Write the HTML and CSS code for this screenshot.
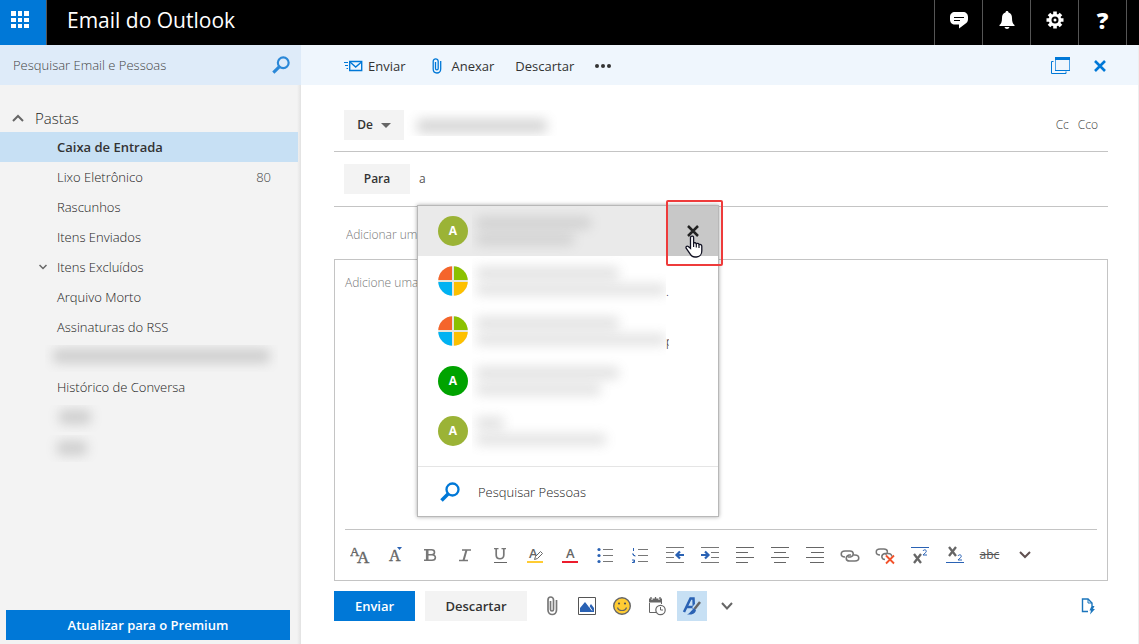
FILE: index.html
```html
<!DOCTYPE html>
<html lang="pt-BR">
<head>
<meta charset="utf-8">
<title>Email do Outlook</title>
<link rel="stylesheet" href="styles.css">
</head>
<body>
<header class="topbar">
  <button class="launcher" aria-label="Aplicativos">
    <svg width="18" height="18" viewBox="0 0 18 18" fill="#fff"><path d="M0 0h5v5H0zM7 0h4v5H7zM13 0h5v5h-5zM0 7h5v4H0zM7 7h4v4H7zM13 7h5v4h-5zM0 13h5v4H0zM7 13h4v4H7zM13 13h5v4h-5z"/></svg>
  </button>
  <h1 class="brand">Email do Outlook</h1>
  <nav class="top-actions">
    <button aria-label="Chat"><svg width="18" height="18" viewBox="0 0 18 18"><path d="M5 1h8c3 0 5 2 5 5v2c0 2-1 4-3 5l-6 4.500v-4H5c-3 0-5-2-5-5V6c0-3 2-5 5-5z" fill="#fff"/><path d="M4 6.500h10M4 9.500h6" stroke="#000" stroke-width="1.200"/></svg></button>
    <button aria-label="Notificações"><svg width="16" height="18" viewBox="0 0 16 18" fill="#fff"><path d="M8 0c1 0 1.500.6 1.500 1.500C12 2.200 13 4.200 13 7c0 4 .8 5.600 2.500 7v1H.5v-1C2.200 12.600 3 11 3 7c0-2.800 1-4.800 3.500-5.500C6.500.6 7 0 8 0zM5.500 16h5c-.4 1.300-1.300 2-2.500 2s-2.100-.7-2.500-2z"/></svg></button>
    <button aria-label="Configurações"><svg width="18" height="18" viewBox="0 0 18 18"><g stroke="#fff" stroke-width="3.600"><path d="M9 .5v17M.5 9h17M3 3l12 12M15 3L3 15"/></g><circle cx="9" cy="9" r="6.300" fill="#fff"/><circle cx="9" cy="9" r="3.500" fill="#000"/><circle cx="9" cy="9" r="1.500" fill="#fff"/></svg></button>
    <button class="help" aria-label="Ajuda">?</button>
  </nav>
</header>

<div class="shell">
  <aside class="sidebar">
    <form class="search">
      <input type="text" aria-label="Pesquisar Email e Pessoas" placeholder="Pesquisar Email e Pessoas">
      <button type="button" aria-label="Pesquisar"><svg width="18" height="18" viewBox="0 0 20 20" fill="none" stroke="#2b88d8"><circle cx="12.500" cy="7.500" r="6" stroke-width="2.400"/><path d="M8 12L1.500 18.500" stroke-width="3.500"/></svg></button>
    </form>
    <nav class="folders">
      <button class="group"><svg width="12" height="8" viewBox="0 0 12 8" fill="none" stroke="#666" stroke-width="2"><path d="M1 7l5-5 5 5"/></svg>Pastas</button>
      <ul>
        <li><a class="selected" href="#">Caixa de Entrada</a></li>
        <li><a href="#">Lixo Eletrônico<span class="count">80</span></a></li>
        <li><a href="#">Rascunhos</a></li>
        <li><a href="#">Itens Enviados</a></li>
        <li><a href="#"><svg class="twisty" width="8" height="6" viewBox="0 0 8 6" fill="none" stroke="#666" stroke-width="1.500"><path d="M.5 1L4 4.500 7.500 1"/></svg>Itens Excluídos</a></li>
        <li><a href="#">Arquivo Morto</a></li>
        <li><a href="#">Assinaturas do RSS</a></li>
        <li class="hidden-row"><span class="veil veil-wide"><i></i></span></li>
        <li><a href="#">Histórico de Conversa</a></li>
        <li class="hidden-row"><span class="veil veil-short"><i></i></span></li>
        <li class="hidden-row"><span class="veil veil-tiny"><i></i></span></li>
      </ul>
    </nav>
    <button class="premium">Atualizar para o Premium</button>
  </aside>

  <main class="compose">
    <div class="commands">
      <button class="cmd cmd-send"><svg width="19" height="12" viewBox="0 0 19 12" fill="none" stroke="#0078d7"><path d="M5.700 1.500h12v9h-12z" stroke-width="1.400"/><path d="M6 2l5.700 5L17.500 2" stroke-width="1.400"/><path d="M0 2.500h4M1 5.500h3M2.500 8.500H4"/></svg>Enviar</button>
      <button class="cmd cmd-attach"><svg width="10" height="16" viewBox="0 0 10 16" fill="none" stroke="#0078d7" stroke-width="1.300"><path d="M3.500 4v6.500c0 1.800 2.700 1.800 2.700 0V3.500c0-3.500-5-3.500-5 0V11c0 5.300 7.500 5.300 7.500 0V3"/></svg>Anexar</button>
      <button class="cmd">Descartar</button>
      <button class="cmd more" aria-label="Mais"><svg width="16" height="4" viewBox="0 0 16 4" fill="#333"><circle cx="2" cy="2" r="2"/><circle cx="8" cy="2" r="2"/><circle cx="14" cy="2" r="2"/></svg></button>
      <span class="spacer"></span>
      <button class="cmd popout" aria-label="Abrir em nova janela"><svg width="19" height="18" viewBox="0 0 19 18" fill="none" stroke="#0078d7"><path d="M4.500 1v12.500h14V1" stroke="#4aa0e6"/><path d="M4 1.500h15" stroke-width="3"/><path d="M4 13.500h15M.5 16.500h14.500v-2"/><path d="M2.500 4.500h-2v12" /></svg></button>
      <button class="cmd" aria-label="Fechar"><svg width="12" height="12" viewBox="0 0 12 12" stroke="#0078d7" stroke-width="2.600"><path d="M1 1l10 10M11 1L1 11"/></svg></button>
    </div>

    <div class="form">
      <div class="row row-from">
        <button class="pill from">De<svg width="10" height="5" viewBox="0 0 10 5" fill="#666"><path d="M0 0h10L5 5z"/></svg></button>
        <span class="veil veil-from"><i></i></span>
        <span class="spacer"></span>
        <a class="copy" href="#">Cc</a>
        <a class="copy" href="#">Cco</a>
      </div>
      <div class="row row-to">
        <button class="pill to">Para</button>
        <input class="to-input" type="text" aria-label="Para" value="a">
        <div class="suggest">
          <ul>
            <li class="active"><span class="avatar olive">A</span><span class="veil person"><i class="w120"></i><i class="w100"></i></span>
              <button class="remove" aria-label="Remover"><svg width="12" height="12" viewBox="0 0 12 12" stroke="#222" stroke-width="2.500"><path d="M1 1l10 10M11 1L1 11"/></svg></button></li>
            <li><svg class="ms" width="30" height="30" viewBox="0 0 30 30"><use href="#mslogo"/></svg><span class="veil person"><i class="w145"></i><i class="w190"></i></span><span class="tail">.r</span></li>
            <li><svg class="ms" width="30" height="30" viewBox="0 0 30 30"><use href="#mslogo"/></svg><span class="veil person"><i class="w145"></i><i class="w190"></i></span><span class="tail">p</span></li>
            <li><span class="avatar green">A</span><span class="veil person"><i class="w145"></i><i class="w125"></i></span></li>
            <li><span class="avatar olive">A</span><span class="veil person"><i class="w30"></i><i class="w130"></i></span></li>
          </ul>
          <button class="find"><svg width="20" height="20" viewBox="0 0 20 20" fill="none" stroke="#0078d7"><circle cx="12.500" cy="7.500" r="6" stroke-width="2.300"/><path d="M8 12L1.500 18.500" stroke-width="3.500"/></svg>Pesquisar Pessoas</button>
          <span class="highlight"></span>
          <svg class="pointer" width="18" height="23" viewBox="0 0 18 23"><path d="M6 1.500c1-.9 2.600-.3 2.600 1.200v5.500c.8-.8 2.300-.6 2.700.5.900-.7 2.400-.4 2.700.9 1.300-.6 2.800.1 2.800 1.600v4.500c0 3.500-2 6.300-5.300 6.300H10c-2.200 0-3.600-1-4.600-2.700L1.300 13.500c-1-1.700.6-3 2-2l2.200 1.800V2.700c0-.5.200-.9.500-1.200z" fill="#fff" stroke="#112" stroke-width="1.300"/><path d="M8.600 8v4M11.300 9v3.500M14 10v3" stroke="#112" stroke-width="1.200"/></svg>
        </div>
      </div>
      <input class="subject" type="text" aria-label="Assunto" placeholder="Adicionar um assunto">
      <section class="editor">
        <textarea aria-label="Mensagem" placeholder="Adicione uma mensagem ou arraste um arquivo aqui"></textarea>
        <div class="format">
          <button aria-label="Fonte"><svg width="20" height="20" viewBox="0 0 20 20" class="serif"><text x="0" y="11" font-size="13">A</text><text x="7" y="18" font-size="17">A</text></svg></button>
          <button aria-label="Tamanho da fonte"><svg width="20" height="20" viewBox="0 0 20 20" class="serif"><text x="4" y="16" font-size="16">A</text><path d="M12 2h5l-2.500 3z" fill="#2a62b4"/></svg></button>
          <button aria-label="Negrito"><svg width="20" height="20" viewBox="0 0 20 20" fill="none" stroke="#777"><path d="M4 4.700h7.500c4 0 4 5 0 5H8M4 15.300h8c4.500 0 4.500-5.600 0-5.600" stroke-width="1.600"/><path d="M7.200 5v10" stroke-width="2.600"/></svg></button>
          <button aria-label="Itálico"><svg width="20" height="20" viewBox="0 0 20 20" fill="none" stroke="#777"><path d="M7 5h9M4 15.500h9" stroke-width="1.500"/><path d="M11.500 5l-3 10.500" stroke-width="2"/></svg></button>
          <button aria-label="Sublinhado"><svg width="20" height="20" viewBox="0 0 20 20" fill="none" stroke="#777"><path d="M4 3.700h4.500M11.500 3.700H16" stroke-width="1.300"/><path d="M6.200 4v6c0 5 7.600 5 7.600 0V4" stroke-width="1.700"/><path d="M4 17.500h13" stroke="#666"/></svg></button>
          <button aria-label="Realce"><svg width="20" height="20" viewBox="0 0 20 20" class="sans"><text x="4" y="13" font-size="13">A</text><path d="M9.500 14.500l1-3 5-5 2 2-5 5z" fill="#fff" stroke="#666"/><path d="M2 17h16" stroke="#fc3" stroke-width="2"/></svg></button>
          <button aria-label="Cor da fonte"><svg width="20" height="20" viewBox="0 0 20 20" class="sans"><text x="6" y="13" font-size="13">A</text><path d="M2 17h16" stroke="#ec1c2c" stroke-width="2"/></svg></button>
          <button aria-label="Marcadores"><svg width="20" height="20" viewBox="0 0 20 20"><path d="M8 4.500h10M8 10.500h10M8 16.500h10" stroke="#777"/><g fill="#2a62b4"><circle cx="4" cy="4.500" r="1.600"/><circle cx="4" cy="10.500" r="1.600"/><circle cx="4" cy="16.500" r="1.600"/></g></svg></button>
          <button aria-label="Numeração"><svg width="20" height="20" viewBox="0 0 20 20" fill="none"><path d="M8 4.500h10M8 10.500h10M8 16.500h10" stroke="#777"/><path d="M3.500 3v3M2 9h1.500v1.500H5v1M2 15h2.500v2.500H2M3 16.200h2" stroke="#2a62b4"/></svg></button>
          <button aria-label="Diminuir recuo"><svg width="20" height="20" viewBox="0 0 20 20" fill="none"><path d="M1 2.500h18M1 7.500h8M1 12.500h8M1 17.500h18" stroke="#777"/><path d="M19 10h-7M15 6.500L11.500 10l3.500 3.500" stroke="#2a62b4" stroke-width="2.200"/></svg></button>
          <button aria-label="Aumentar recuo"><svg width="20" height="20" viewBox="0 0 20 20" fill="none"><path d="M1 2.500h18M11 7.500h8M11 12.500h8M1 17.500h18" stroke="#777"/><path d="M1 10h7M5 6.500L8.500 10 5 13.500" stroke="#2a62b4" stroke-width="2.200"/></svg></button>
          <button aria-label="Alinhar à esquerda"><svg width="20" height="20" viewBox="0 0 20 20"><path d="M1 2.500h18M1 7.500h12M1 12.500h18M1 17.500h12" stroke="#666"/></svg></button>
          <button aria-label="Centralizar"><svg width="20" height="20" viewBox="0 0 20 20"><path d="M1 2.500h18M4 7.500h12M1 12.500h18M4 17.500h12" stroke="#666"/></svg></button>
          <button aria-label="Alinhar à direita"><svg width="20" height="20" viewBox="0 0 20 20"><path d="M1 2.500h18M6 7.500h13M1 12.500h18M5 17.500h14" stroke="#666"/></svg></button>
          <button aria-label="Inserir link"><svg width="20" height="20" viewBox="0 0 20 20" fill="none" stroke="#777" stroke-width="1.600"><path d="M5 12c-5 0-5-6 0-6h5c4 0 4.500 5 .5 6H8"/><path d="M13.500 10h1.500c5 0 5 6 0 6H9.500c-4 0-4.500-4.500-.5-6h2"/></svg></button>
          <button aria-label="Remover link"><svg width="20" height="20" viewBox="0 0 20 20" fill="none" stroke="#777" stroke-width="1.500"><path d="M5 10c-5 0-5-6 0-6h4c4 0 4.500 4 1.500 6"/><path d="M10 14.500c-4-.5-4.500-5 0-6h3c3 0 4 1.500 3.500 3"/><path d="M11 10.500l8 8M19 10.500l-8 8" stroke="#f2522b" stroke-width="1.800"/></svg></button>
          <button aria-label="Sobrescrito"><svg width="20" height="20" viewBox="0 0 20 20" fill="none"><path d="M4 9l7 9M11 9l-7 9" stroke="#666" stroke-width="2.300"/><path d="M13 6c.5-1.700 3.500-1.500 3.300.3C16 8 14 8.500 13 10h4" stroke="#2a62b4"/><path d="M1 2.500h18" stroke="#2a62b4"/></svg></button>
          <button aria-label="Subscrito"><svg width="20" height="20" viewBox="0 0 20 20" fill="none"><path d="M4 2l7 9M11 2l-7 9" stroke="#666" stroke-width="2.300"/><path d="M13 11c.5-1.700 3.500-1.500 3.300.3-.3 1.700-2.300 2.200-3.300 3.700h4" stroke="#2a62b4"/><path d="M1 17.500h18" stroke="#2a62b4"/></svg></button>
          <button aria-label="Tachado"><s class="strike">abc</s></button>
          <button aria-label="Mais formatação"><svg width="20" height="20" viewBox="0 0 20 20" fill="none" stroke="#605050" stroke-width="2"><path d="M5 7l5 5 5-5"/></svg></button>
        </div>
      </section>
      <div class="footer">
        <button class="send">Enviar</button>
        <button class="discard">Descartar</button>
        <div class="tools">
          <button aria-label="Anexar"><svg width="20" height="20" viewBox="0 0 20 20" fill="none" stroke="#777" stroke-width="1.700"><path d="M8.500 5v8.500c0 2 3 2 3 0V4c0-4-5.500-4-5.500 0v10c0 6 8.500 6 8.500 0V4"/></svg></button>
          <button aria-label="Inserir imagem"><svg width="20" height="20" viewBox="0 0 20 20"><path d="M1.500 1.500h17v17h-17z" fill="#fff" stroke="#555"/><path d="M3 16v-4l5-6 4 5 2-3 3 4v4z" fill="#2a62b4"/><path d="M11 8.500l4 6" stroke="#fff"/></svg></button>
          <button aria-label="Emoji"><svg width="20" height="20" viewBox="0 0 20 20"><circle cx="10" cy="10" r="8.300" fill="#fc3" stroke="#666" stroke-width="1.400"/><path d="M5.500 11.500c1 4 8 4 9 0" fill="none" stroke="#666" stroke-width="1.200"/><circle cx="7" cy="7.500" r="1.100" fill="#555"/><circle cx="13" cy="7.500" r="1.100" fill="#555"/></svg></button>
          <button aria-label="Calendário"><svg width="20" height="20" viewBox="0 0 20 20" fill="none" stroke="#666"><path d="M2.500 7v9.500H9M14.500 6v2"/><path d="M2 4.500h13" stroke-width="4"/><path d="M5 1v3M12 1v3" stroke="#fff"/><path d="M4 1v2M8.500 1v2M13 1v2" stroke-width="1.300"/><circle cx="13.500" cy="14" r="4.700" fill="#fff" stroke-width="1.200"/><path d="M13.500 11v3h2.500"/></svg></button>
          <button class="on" aria-label="Formatação"><svg width="20" height="20" viewBox="0 0 20 20"><path d="M2 16L8.500 2.500h3L12 14M5 11h7" fill="none" stroke="#2a62b4" stroke-width="2.500"/><path d="M18 6l-6 7" stroke="#c6dff3" stroke-width="5"/><path d="M18 6l-5.500 7" stroke="#666" stroke-width="2.500"/><path d="M12.500 12.500l1.500 2c-1 3.500-5 4.500-9 4 3-1 3.500-4 7.500-6z" fill="#2a62b4"/></svg></button>
          <button aria-label="Mais"><svg width="20" height="20" viewBox="0 0 20 20" fill="none" stroke="#666" stroke-width="2"><path d="M5 7l5 5.500L15 7"/></svg></button>
        </div>
        <span class="spacer"></span>
        <button class="draft" aria-label="Rascunho"><svg width="14" height="17" viewBox="0 0 14 17" fill="none" stroke="#1b75bc"><path d="M7 13.500H1.500V1H7l4 4v3" stroke-width="1.400"/><path d="M7 1v4h4"/><path d="M10.500 8h3l-1.500 3h2l-5 5.500 1-4H8.500z" fill="#1b75bc" stroke="none"/></svg></button>
      </div>
    </div>
  </main>
</div>
<svg class="defs" width="0" height="0" aria-hidden="true"><defs><clipPath id="disc"><circle cx="15" cy="15" r="14.800"/></clipPath><g id="mslogo" clip-path="url(#disc)"><path d="M0 0h30v30H0z" fill="#e6e6dc"/><path d="M0 0h14v14H0z" fill="#f5652b"/><path d="M16 0h14v14H16z" fill="#8bc100"/><path d="M0 16h14v14H0z" fill="#00b2f2"/><path d="M16 16h14v14H16z" fill="#fdc000"/></g></defs></svg>
</body>
</html>
```
FILE: styles.css
```css
* { box-sizing: border-box; }
body {
  margin: 0;
  height: 100vh;
  min-height: 560px;
  display: flex;
  flex-direction: column;
  font: 300 13px/20px "Open Sans", "Noto Sans", sans-serif;
  color: #222;
  background: #fff;
}
button, input, textarea { font: inherit; color: inherit; border: 0; padding: 0; margin: 0; background: none; border-radius: 0; outline: 0; }
button { cursor: pointer; display: flex; align-items: center; justify-content: center; }
a { color: inherit; text-decoration: none; }
ul { list-style: none; margin: 0; padding: 0; }
svg { display: block; flex: none; }
.defs { position: absolute; }
.spacer { flex: 1; }

.topbar { height: 45px; flex: none; display: flex; background: #000; color: #fff; }
.launcher { width: 47px; padding: 0 6px 6px 0; background: #0078d7; border-right: 1px solid #555; }
.brand { margin: 0 0 0 20px; font-size: 21px; line-height: 40px; font-weight: 400; flex: 1; }
.top-actions { display: flex; border-right: 1px solid #555; margin-right: 12px; }
.top-actions button { width: 48px; padding-bottom: 6px; border-left: 1px solid #555; }
.top-actions .help { font-size: 23px; font-weight: 800; }

.shell { flex: 1; display: flex; min-height: 0; }
.sidebar { width: 301px; flex: none; display: flex; flex-direction: column; background: linear-gradient(to right, #f3f3f3 297px, #e2e2e2 301px); }
.search { height: 40px; flex: none; display: flex; align-items: center; padding: 0 11px 0 13px; background: #deebf9; }
.search input { flex: 1; min-width: 0; }
.search input::placeholder { color: #444; opacity: 1; }
.folders { flex: 1; padding: 18px 3px 0 0; min-height: 0; }
.group { height: 29px; padding-left: 12px; gap: 11px; font-size: 15px; }
.folders a { display: flex; align-items: center; height: 30px; padding: 0 27px 0 57px; position: relative; }
.folders .selected { background: #c7e0f4; font-weight: 600; color: #333; }
.count { margin-left: auto; color: #444; }
.twisty { position: absolute; left: 39px; }
.hidden-row { display: flex; height: 30px; padding: 3px 0 0 45px; }
.premium { height: 30px; flex: none; margin: 0 11px 4px 6px; background: #0078d7; color: #fff; font-weight: 600; }

.veil { display: block; overflow: hidden; }
.veil i { display: block; background: #777; opacity: .3; filter: blur(6px); height: 14px; border-radius: 4px; }
.veil-wide { width: 233px; padding: 4px 8px; }
.veil-short { width: 60px; padding: 5px 14px; }
.veil-tiny { width: 60px; padding: 6px 18px 6px 12px; }
.veil-from { width: 150px; height: 26px; margin: 0 0 4px 3px; padding: 9px 10px 0; }

.compose { flex: 1; min-width: 0; display: flex; flex-direction: column; border-right: 1px solid #eee; }
.commands { height: 40px; flex: none; display: flex; align-items: center; gap: 21px; padding: 2px 32px 0 43px; background: #eff6fd; font-weight: 400; color: #333; }
.cmd-send { gap: 5px; }
.cmd-attach { gap: 10px; margin-left: 5px; }
.commands .popout { margin-right: 3px; }
.form { flex: 1; min-height: 0; display: flex; flex-direction: column; padding: 0 30px 23px 33px; }
.row { position: relative; display: flex; align-items: center; border-bottom: 1px solid #c4c4c4; padding: 0 10px; }
.row-from { height: 67px; padding-top: 14px; }
.row-to { height: 55px; }
.pill { height: 30px; background: #f3f3f3; font-size: 12px; font-weight: 600; color: #333; }
.from { width: 60px; gap: 8px; }
.to { width: 66px; }
.copy { font-size: 12px; color: #444; margin-left: 9px; }
.to-input { flex: 1; margin-left: 9px; font-size: 12px; font-weight: 400; color: #555; }
.subject { height: 52px; flex: none; padding: 2px 12px 0; font-size: 12px; }
.subject::placeholder, .editor textarea::placeholder { color: #777; opacity: 1; }
.editor { flex: 1; min-height: 0; display: flex; flex-direction: column; border: 1px solid #c4c4c4; }
.editor textarea { flex: 1; min-height: 0; resize: none; padding: 13px 10px; font-size: 12px; }
.format { display: flex; margin: 0 10px; height: 51px; flex: none; border-top: 1px solid #c4c4c4; }
.format button { width: 35px; flex: none; }
.format button:first-child { margin-left: -3px; }
.serif text { font-family: "Liberation Serif", serif; font-weight: 400; fill: #666; stroke: #666; stroke-width: 0.4; }
.sans text { font-family: "Open Sans", sans-serif; font-weight: 600; fill: #666; }
.strike { font-size: 12px; font-weight: 400; color: #555; }

.footer { display: flex; align-items: center; gap: 10px; padding-top: 10px; flex: none; }
.send, .discard { height: 30px; font-weight: 600; }
.send { width: 81px; background: #0078d7; color: #fff; }
.discard { width: 102px; background: #f3f3f3; color: #333; }
.tools { display: flex; gap: 5px; }
.tools button { width: 30px; height: 30px; }
.tools .on { background: #c7e0f4; }
.draft { padding-right: 13px; }

.suggest { position: absolute; top: 53px; left: 83px; width: 302px; z-index: 2; background: #fff; border: 1px solid #b8b8b8; box-shadow: 0 0 4px rgba(0, 0, 0, .35); }
.suggest ul { padding-bottom: 10px; }
.suggest li { display: flex; align-items: center; height: 50px; padding-left: 20px; }
.suggest .active { background: #eaeaea; }
.avatar { width: 30px; height: 30px; border-radius: 50%; color: #fff; font-size: 12px; font-weight: 700; line-height: 30px; text-align: center; flex: none; }
.olive { background: #9bb336; }
.green { background: #00a300; }
.person { width: 194px; height: 50px; margin-left: 4px; padding: 11px 4px; display: flex; flex-direction: column; gap: 5px; flex: none; }
.veil.person i { height: 13px; opacity: .22; }
.w30 { width: 28px; } .w100 { width: 98px; } .w120 { width: 115px; } .w125 { width: 125px; }
.w130 { width: 130px; } .w145 { width: 143px; } .w190 { width: 190px; }
.tail { width: 3px; overflow: hidden; font-size: 12px; padding-top: 21px; }
.remove { width: 51px; height: 50px; margin-left: auto; background: #c8c8c8; }
.find { width: 100%; height: 50px; padding-left: 22px; gap: 18px; justify-content: flex-start; border-top: 1px solid #e5e5e5; }
.highlight { position: absolute; top: -6px; right: -5px; width: 57px; height: 66px; border: 2px solid #ee3b3b; border-radius: 2px; pointer-events: none; }
.pointer { position: absolute; top: 29px; left: 267px; pointer-events: none; }
```
